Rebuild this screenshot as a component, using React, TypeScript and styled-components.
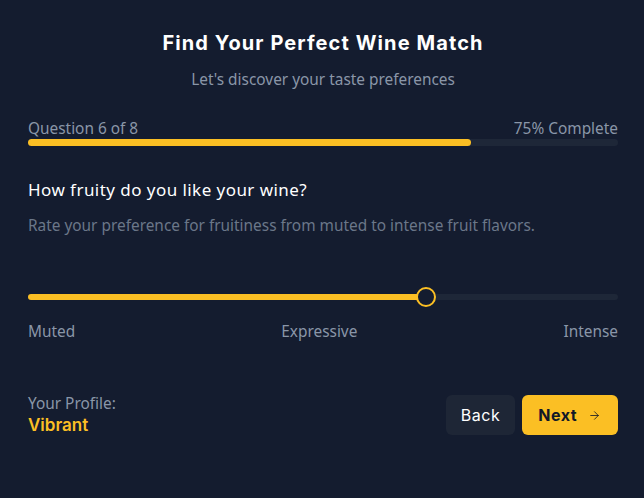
import React from "react";
import styled, { createGlobalStyle } from "styled-components";
import { ArrowRight } from "lucide-react";

const GlobalStyle = createGlobalStyle`
  html, body {
    margin: 0;
    padding: 0;
    background: #141c2f;
  }
  body {
    font-family: "Noto Sans", "Open Sans", sans-serif;
  }
`;

const Page = styled.div`
  width: 644px;
  height: 498px;
  box-sizing: border-box;
  padding: 29px 26px 0 28px;
  background: #141c2f;
  display: flex;
  flex-direction: column;
`;

const Title = styled.h1`
  margin: 0;
  text-align: center;
  font-family: Inter, "Liberation Sans", sans-serif;
  font-weight: 700;
  font-size: 20px;
  line-height: 28px;
  color: #ffffff;
  letter-spacing: 1.1px;
`;

const Subtitle = styled.p`
  margin: 12px 0 0;
  text-align: center;
  font-size: 15.4px;
  line-height: 22px;
  color: #8a96a8;
`;

const ProgressHeader = styled.div`
  margin-top: 28px;
  display: flex;
  justify-content: space-between;
  font-size: 15.4px;
  line-height: 20px;
  color: #8a96a8;
`;

const Track = styled.div<{ $height: number }>`
  position: relative;
  height: ${(p) => p.$height}px;
  border-radius: 999px;
  background: #1e2738;
`;

const Fill = styled.div`
  height: 100%;
  border-radius: 999px;
  background: #fbbf24;
`;

const Question = styled.h2`
  margin: 32px 0 0;
  font-size: 17px;
  font-weight: 400;
  line-height: 24px;
  letter-spacing: 0.45px;
  color: #ffffff;
`;

const Description = styled.p`
  margin: 13px 0 0;
  font-size: 15.4px;
  line-height: 22px;
  color: #6b7789;
`;

const SliderArea = styled.div`
  margin-top: 50px;
  height: 20px;
  display: flex;
  flex-direction: column;
  justify-content: center;
`;

const Thumb = styled.div`
  position: absolute;
  top: 50%;
  width: 20px;
  height: 20px;
  box-sizing: border-box;
  border-radius: 50%;
  border: 2px solid #fbbf24;
  background: #141c2f;
  transform: translate(-50%, -50%);
`;

const ScaleLabels = styled.div`
  margin-top: 14px;
  display: flex;
  justify-content: space-between;
  font-size: 15.4px;
  line-height: 22px;
  color: #8a96a8;
`;

const Footer = styled.div`
  margin-top: 51px;
  display: flex;
  align-items: center;
  justify-content: space-between;
`;

const Profile = styled.div`
  display: flex;
  flex-direction: column;
`;

const ProfileLabel = styled.span`
  font-size: 15.4px;
  line-height: 20px;
  color: #8a96a8;
`;

const ProfileValue = styled.span`
  font-family: Inter, "Liberation Sans", sans-serif;
  font-size: 17px;
  font-weight: 600;
  line-height: 22px;
  color: #fbbf24;
`;

const Buttons = styled.div`
  display: flex;
  gap: 7px;
`;

const Button = styled.button<{ $primary?: boolean }>`
  height: 40px;
  box-sizing: border-box;
  border: none;
  border-radius: 6px;
  padding: ${(p) => (p.$primary ? "0 17px 0 16px" : "0 15px")};
  display: flex;
  align-items: center;
  gap: 11px;
  font-family: Inter, "Liberation Sans", sans-serif;
  font-size: 16px;
  letter-spacing: 0.5px;
  font-weight: ${(p) => (p.$primary ? 700 : 400)};
  background: ${(p) => (p.$primary ? "#fbbf24" : "#1e2636")};
  color: ${(p) => (p.$primary ? "#111827" : "#ffffff")};
  cursor: pointer;
`;

export default function App() {
  const progress = 75;
  const fruitiness = 67.5;

  return (
    <>
      <GlobalStyle />
      <Page>
        <Title>Find Your Perfect Wine Match</Title>
        <Subtitle>Let's discover your taste preferences</Subtitle>

        <ProgressHeader>
          <span>Question 6 of 8</span>
          <span>{progress}% Complete</span>
        </ProgressHeader>
        <Track $height={7}>
          <Fill style={{ width: `${progress}%` }} />
        </Track>

        <Question>How fruity do you like your wine?</Question>
        <Description>
          Rate your preference for fruitiness from muted to intense fruit flavors.
        </Description>

        <SliderArea>
          <Track $height={6}>
            <Fill style={{ width: `${fruitiness}%` }} />
            <Thumb style={{ left: `${fruitiness}%` }} />
          </Track>
        </SliderArea>

        <ScaleLabels>
          <span>Muted</span>
          <span>Expressive</span>
          <span>Intense</span>
        </ScaleLabels>

        <Footer>
          <Profile>
            <ProfileLabel>Your Profile:</ProfileLabel>
            <ProfileValue>Vibrant</ProfileValue>
          </Profile>
          <Buttons>
            <Button>Back</Button>
            <Button $primary>
              Next
              <ArrowRight size={13} strokeWidth={1.5} />
            </Button>
          </Buttons>
        </Footer>
      </Page>
    </>
  );
}
